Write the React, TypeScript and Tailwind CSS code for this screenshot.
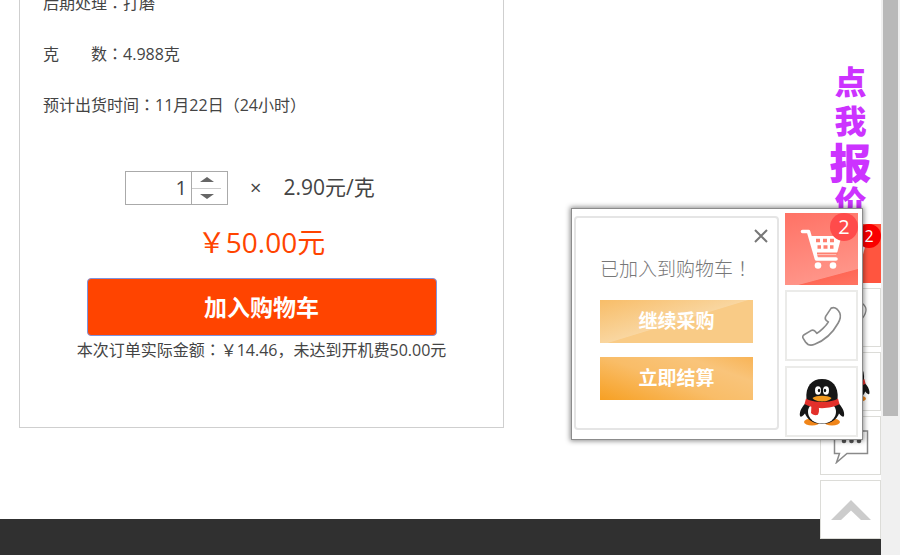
import React, { useState } from 'react';

// 标点居中显示
const P: React.FC<{ children: string }> = ({ children }) => (
  <span lang="zh-TW" className="font-['Noto_Sans_CJK_TC',sans-serif]">{children}</span>
);

const CartIcon = ({ className }: { className: string }) => (
  <svg viewBox="0 0 48 48" className={className} fill="none" stroke="#fff">
    <path d="M4.500 6.500h6L18.500 34H38" strokeWidth="3.600" strokeLinejoin="round" strokeLinecap="round" />
    <path d="M13 11H43.500L39.500 26.500L38 30H18z" fill="#fff" stroke="none" />
    <path d="M18 15.500h4M25 15.500h4M32 15.500h4M19.500 22h3.500M25.500 22h4M32 22h3.500" stroke="#ff8070" strokeWidth="3.600" />
    <path d="M19 28.500H40" stroke="#ff8070" strokeWidth="2" />
    <circle cx="20" cy="40.500" r="3.300" fill="#fff" stroke="none" />
    <circle cx="35" cy="40.500" r="3.300" fill="#fff" stroke="none" />
  </svg>
);

const PhoneIcon = ({ className }: { className: string }) => (
  <svg viewBox="0 0 48 48" className={className} fill="none" stroke="#8a8a8a" strokeWidth="1.800" strokeLinejoin="round">
    <path d="M34 4.500C37.500 3 41 5 43.500 10C45 14 43.500 17.500 41.500 21C36 31 26 40 16 44C11.500 46 8.500 45 6 41.500L3.500 37.500C2.500 36 3 34.500 4.500 33.500L12 29C14 28 16 28.500 17.500 31L18.500 32C22 30 28.500 24 31 19.500C28 18 26.500 16.500 28 13.500z" />
  </svg>
);

const PenguinIcon = ({ className }: { className: string }) => (
  <svg viewBox="0 0 48 48" className={className}>
    <path d="M9 24C4 28 1 34 2 38C3 40 6 37 8 34zM39 24C44 28 47 34 46 38C45 40 42 37 40 34z" fill="#161616" />
    <ellipse cx="14" cy="44" rx="8" ry="3.500" fill="#f08519" />
    <ellipse cx="34" cy="44" rx="8" ry="3.500" fill="#f08519" />
    <ellipse cx="24" cy="32" rx="17.500" ry="14" fill="#161616" />
    <ellipse cx="24" cy="34" rx="14" ry="11.500" fill="#fff" />
    <path d="M8.500 22C7 8 14 1 24 1S41 8 39.500 22C36 29 12 29 8.500 22z" fill="#161616" />
    <ellipse cx="20" cy="12.500" rx="3" ry="4.200" fill="#fff" />
    <ellipse cx="28" cy="12.500" rx="3" ry="4.200" fill="#fff" />
    <ellipse cx="21" cy="12.500" rx="1.200" ry="1.800" fill="#111" />
    <ellipse cx="27" cy="12.500" rx="1.200" ry="1.800" fill="#111" />
    <path d="M8 20.500C14 25 34 25 40 20.500L41.500 26C33 31.500 15 31.500 6.500 26z" fill="#e3302b" />
    <path d="M13.500 27L20.500 28.500C21.500 32 21 35.500 19.500 37C16.500 37.500 14 36.500 13 35z" fill="#e3302b" />
    <path d="M14.500 20C18 17 30 17 33.500 20C31 24.500 17 24.500 14.500 20z" fill="#f39a1f" />
  </svg>
);

const ChatIcon = ({ className }: { className: string }) => (
  <svg viewBox="0 0 36 36" className={className} fill="none" stroke="#8a8a8a" strokeWidth="1.500">
    <path d="M1.500 3H34.500V25.500H14L3.500 34.500L6.500 25.500H1.500z" />
    <g fill="#555" stroke="none">
      <circle cx="11" cy="13" r="2.300" />
      <circle cx="18.500" cy="13" r="2.300" />
      <circle cx="26" cy="13" r="2.300" />
    </g>
  </svg>
);

const cell = 'flex h-[59px] w-full items-center justify-center border border-[#dcdcd8] bg-white';
const bigCell = 'flex h-[71px] w-[73px] items-center justify-center border-2 border-[#ebebe9] bg-white';
const row = 'h-[51px] text-base leading-[51px]';

// 右侧悬浮工具栏
const SideBar = () => (
  <aside className="absolute right-0 top-[60px] flex w-[61px] flex-col items-center">
    <a href="#quote" className="flex h-[164px] flex-col items-center pt-0.5 font-black text-[#cc33ff]">
      <span className="text-[32px] leading-[39px]">点</span>
      <span className="text-[32px] leading-[39px]">我</span>
      <span className="text-[42px] leading-[46px]">报</span>
      <span className="text-[32px] leading-[32px]">价</span>
    </a>
    <nav className="flex w-full flex-col gap-[5px]">
      <button aria-label="购物车" className="relative flex h-[59px] w-full items-center justify-center bg-[#ff553f]">
        <CartIcon className="size-9" />
        <span className="absolute right-0 top-0 flex size-6 items-center justify-center rounded-full bg-[#f90000] text-base text-white">2</span>
      </button>
      <button aria-label="电话" className={cell}><PhoneIcon className="size-9" /></button>
      <button aria-label="QQ" className={cell}><PenguinIcon className="size-10" /></button>
      <button aria-label="留言" className={cell}><ChatIcon className="size-9" /></button>
      <button aria-label="返回顶部" className={cell}>
        <svg viewBox="0 0 40 20" className="h-5 w-10" fill="#cccccc">
          <path d="M20 0L40 20H30L20 10.500L10 20H0z" />
        </svg>
      </button>
    </nav>
  </aside>
);

// 加入购物车后的提示
const CartPopup = ({ onClose }: { onClose: () => void }) => (
  <div role="dialog" aria-label="购物车提示" className="absolute right-[18px] top-[208px] flex w-[292px] items-start gap-1.5 border border-[#8c8c8c] bg-white pb-0.5 pl-0.5 pr-1 pt-1 shadow-[0_0_5px_1px_rgba(0,0,0,0.45)]">
    <div className="mt-[3px] flex h-[214px] flex-1 flex-col rounded border-2 border-[#e5e5e5] px-6 pt-1.5">
      <button onClick={onClose} aria-label="关闭" className="-mr-5 flex size-6 items-center justify-center self-end">
        <svg viewBox="0 0 14 14" className="size-3.5" stroke="#777" strokeWidth="2">
          <path d="M1 1L13 13M13 1L1 13" />
        </svg>
      </button>
      <p className="mt-2 h-6 whitespace-nowrap text-[19px] font-light leading-6 text-[#777]">已加入到购物车<P>！</P></p>
      <button className="mt-5 h-[43px] bg-[linear-gradient(163deg,#f8bd68_0%,#f9d6a0_50%,#f9cb86_51%,#f9cb86_100%)] text-[19px] font-bold text-white">继续采购</button>
      <button className="mt-3.5 h-[43px] bg-[linear-gradient(20deg,#f7a023_0%,#f9bd68_45%,#f9c47a_75%,#f8b457_100%)] text-[19px] font-bold text-white">立即结算</button>
    </div>
    <div className="flex flex-col gap-[5px]">
      <button aria-label="购物车" className="relative flex h-[72px] w-[73px] items-center justify-center bg-[linear-gradient(165deg,#ff7265_0%,#ff9488_82%,#ff6856_83%,#ff7463_100%)]">
        <CartIcon className="size-12" />
        <span className="absolute right-0 top-0 flex size-7 items-center justify-center rounded-full bg-[#ff4b4b] text-xl text-white">2</span>
      </button>
      <button aria-label="电话" className={bigCell}><PhoneIcon className="size-11" /></button>
      <button aria-label="QQ" className={bigCell}><PenguinIcon className="size-12" /></button>
    </div>
  </div>
);

const App: React.FC = () => {
  const [count, setCount] = useState(1);
  const [popupOpen, setPopupOpen] = useState(true);

  return (
    <div className="flex h-screen overflow-hidden bg-white font-['Open_Sans','Noto_Sans_CJK_SC',sans-serif] text-[#444]">
      <div className="relative flex min-w-0 flex-1 flex-col">
        <main className="px-[19px]">
          <section className="-mt-[23px] flex w-[485px] flex-col border border-t-0 border-[#cfcfcf] px-[23px] pb-[65px]">
            <p className={row}>后期处理<P>：</P>打磨</p>
            <p className={row}>克<span className="inline-block w-8" />数<P>：</P>4.988克</p>
            <p className={row}>预计出货时间<P>：</P>11月22日<P>（</P>24小时<P>）</P></p>

            <div className="ml-[82px] mt-[41px] flex h-[34px] items-center text-xl">
              <div className="flex h-full w-[103px] border border-[#aaa]">
                <input
                  aria-label="数量"
                  value={count}
                  onChange={(e) => setCount(Number(e.target.value) || 1)}
                  className="w-[66px] border-r border-[#aaa] pr-1 text-right outline-none"
                />
                <div className="flex flex-1 flex-col pr-1.5">
                  <button aria-label="增加" onClick={() => setCount(count + 1)} className="flex flex-1 items-center justify-center border-b border-[#ccc]">
                    <svg viewBox="0 0 14 5" className="h-[5px] w-3.5" fill="#666"><path d="M0 5L7 0L14 5z" /></svg>
                  </button>
                  <button aria-label="减少" onClick={() => setCount(Math.max(1, count - 1))} className="flex flex-1 items-center justify-center">
                    <svg viewBox="0 0 14 5" className="h-[5px] w-3.5" fill="#666"><path d="M0 0L7 5L14 0z" /></svg>
                  </button>
                </div>
              </div>
              <span className="ml-[22px]">×</span>
              <span className="ml-[22px] text-[21px]">2.90元/克</span>
            </div>

            <p className="mt-4 h-[42px] text-center text-[28px] leading-[42px] text-[#ff4400]">￥50.00元</p>
            <button onClick={() => setPopupOpen(true)} className="mx-auto mt-[15px] h-[58px] w-[350px] rounded-sm border border-[#7f93dc] bg-[#ff4400] text-[23px] font-bold text-white">
              加入购物车
            </button>
            <p className="h-[26px] whitespace-nowrap text-center text-base leading-[26px]">
              本次订单实际金额<P>：</P>￥14.46，未达到开机费50.00元
            </p>
          </section>
        </main>
        <footer className="mt-[91px] min-h-9 flex-1 bg-[#303030]" />
        <SideBar />
        {popupOpen && <CartPopup onClose={() => setPopupOpen(false)} />}
      </div>

      {/* 滚动条 */}
      <div className="w-[19px] bg-[#f0f0f0] px-0.5">
        <div className="h-3/4 bg-[#b9b9b9]" />
      </div>
    </div>
  );
};

export default App;
